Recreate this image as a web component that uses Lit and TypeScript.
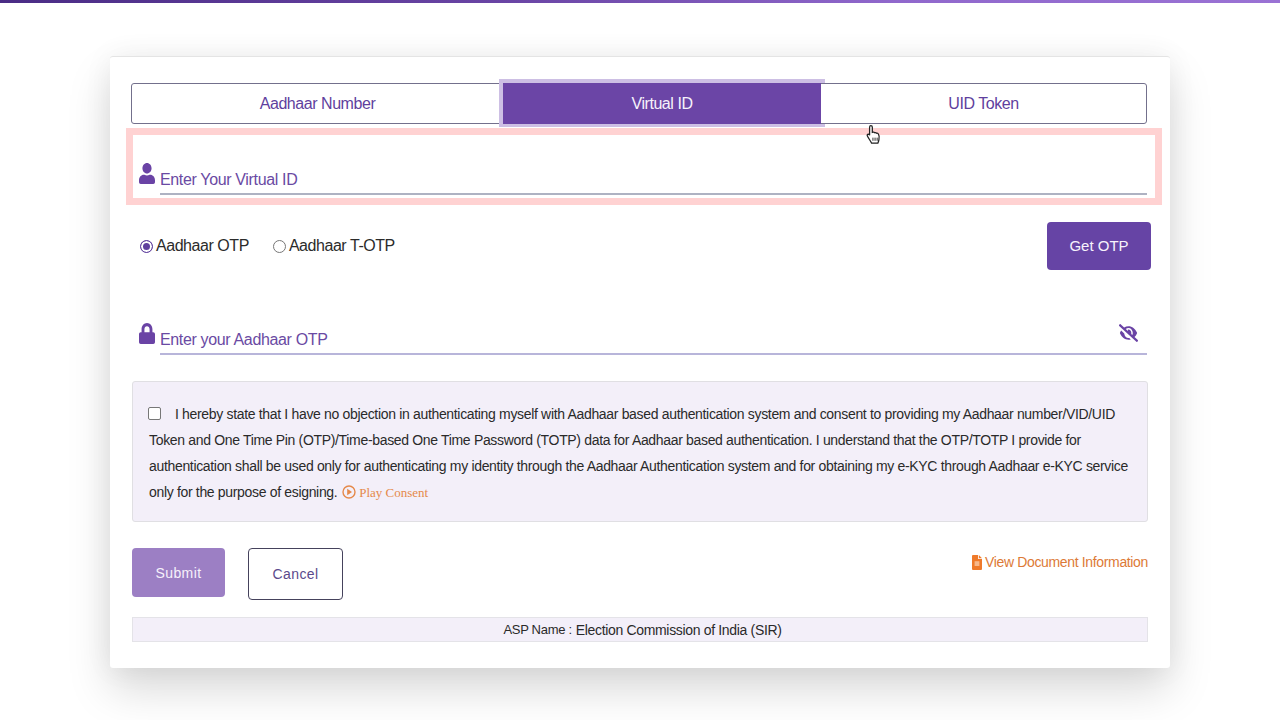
import { LitElement, html, css } from "lit";
import { customElement } from "lit/decorators.js";

@customElement("app-root")
export class AppRoot extends LitElement {
  static styles = css`
    :host { display: block; width: 1280px; height: 720px; overflow: hidden; background: #fff; position: relative; font-family: "Liberation Sans", Arial, sans-serif; color: #222; }
    * { box-sizing: border-box; }
    .bar { height: 3px; background: linear-gradient(90deg, #4a2c85 0%, #6a45a5 40%, #9068cc 70%, #9a72d4 100%); }
    .card { width: 1060px; margin: 53px 0 0 110px; padding: 26px 23px 26px 21px; background: #fff; border-radius: 3px; border-top: 1px solid #e4e4e4; box-shadow: 0 22px 44px rgba(0,0,0,.15), 0 0 30px rgba(0,0,0,.06); }
    .tabs { display: flex; height: 41px; border: 1px solid #73708c; border-radius: 3px; width: 1016px; }
    .tab { font: inherit; font-size: 16px; background: none; border: 0; padding: 0; color: #5f3f9e; letter-spacing: -.45px; }
    .t1 { width: 371px; }
    .t2 { width: 318px; background: #6b45a6; color: #f6f2fb; position: relative; margin: -1px 0; }
    .t2::before { content: ""; position: absolute; inset: -4px -4px -3px -4px; border: solid #cdbfe4; border-width: 4px 0 3px 4px; }
    .t3 { width: 325px; }
    .pink { margin: 4px -15px 0 -5px; height: 77px; border: 7px solid #ffd2d2; background: #fff; display: flex; align-items: flex-end; padding: 0 8px 3px 6px; }
    .field { display: flex; align-items: flex-end; flex: 1; }
    .ico { flex: none; fill: #6a43a5; display: block; }
    .person { width: 16px; height: 21px; margin: 0 5px 11px 0; }
    .input { flex: 1; height: 34px; border: 0; border-bottom: 2px solid #aeb2c2; outline: none; padding: 7px 0 1px; font: inherit; font-size: 16px; letter-spacing: -.35px; color: #5f3f9e; background: none; }
    .input::placeholder { color: #6a4aa3; opacity: 1; }
    .mode { display: flex; justify-content: space-between; align-items: center; height: 48px; margin: 17px -4px 0 0; padding-left: 9px; }
    .radios { display: flex; align-items: center; font-size: 16px; letter-spacing: -.45px; color: #2b2b2b; }
    .radio { width: 13px; height: 13px; border-radius: 50%; border: 1px solid #777; background: #fff; margin-right: 3px; flex: none; }
    .radio.on { border: 1.5px solid #5f3f9e; position: relative; background: #5f3f9e; box-shadow: inset 0 0 0 2px #fff; }
    .gap { width: 24px; }
    .otp { width: 104px; height: 48px; border: 0; border-radius: 4px; background: #6644a5; color: #f7f3fc; font: inherit; font-size: 15px; padding: 0 0 2px; letter-spacing: 0; }
    .secure { display: flex; align-items: flex-end; margin: 50px 0 0 8px; height: 35px; position: relative; }
    .lock { width: 16px; height: 21px; margin: 0 5px 11px 0; }
    .secure .input { border-bottom-color: #b8b5da; height: 35px; }
    .eye { position: absolute; right: 9px; top: 4px; width: 19px; height: 18px; }
    .consent { margin-top: 26px; margin-left: 1px; width: 1016px; height: 141px; background: #f3eff9; border: 1px solid #e0dfe3; border-radius: 3px; padding: 19px 0 0 16px; font-size: 14px; letter-spacing: -.33px; line-height: 26px; color: #2a2a2a; white-space: nowrap; }
    .check { display: inline-block; width: 13px; height: 13px; border: 1px solid #777; border-radius: 2px; background: #fff; margin: 0 14px 0 -1px; vertical-align: -1px; }
    .play { color: #e5894a; font-family: "Liberation Serif", serif; font-size: 13px; letter-spacing: 0; }
    .play svg { width: 14px; height: 14px; vertical-align: -2px; margin: 0 0 0 1px; }
    .actions { display: flex; align-items: flex-start; margin: 26px 0 0 1px; height: 52px; width: 1016px; }
    .btn { font: inherit; font-size: 14px; letter-spacing: .4px; border-radius: 4px; }
    .submit { width: 93px; height: 49px; border: 0; background: #9c7fc4; color: #f6f1fb; }
    .cancel { width: 95px; height: 52px; margin-left: 23px; border: 1.5px solid #45425c; background: #fff; color: #5a4a8c; }
    .doc { margin-left: auto; display: flex; align-items: center; gap: 3px; margin-top: 6px; font-size: 14px; letter-spacing: -.35px; color: #dd7a36; }
    .doc svg { width: 10px; height: 15px; }
    .asp { margin: 17px 0 0 1px; width: 1016px; height: 25px; background: #f3eff9; border: 1px solid #e4e3e8; display: flex; justify-content: center; align-items: center; padding: 1px 0 0 5px; gap: 4px; font-size: 14px; letter-spacing: -.33px; color: #2a2a2a; }
    .asp small { font-size: 13px; letter-spacing: -.3px; position: relative; top: -1px; }
    .hand { position: absolute; left: 866px; top: 124px; width: 16px; height: 21px; }
  `;
  render() {
    return html`
      <div class="bar"></div>
      <div class="card">
        <div class="tabs">
          <button class="tab t1">Aadhaar Number</button>
          <button class="tab t2">Virtual ID</button>
          <button class="tab t3">UID Token</button>
        </div>
        <div class="pink">
          <div class="field">
            <svg class="ico person" viewBox="0 0 448 512" preserveAspectRatio="none"><path d="M224 256c70.7 0 128-57.3 128-128S294.7 0 224 0 96 57.3 96 128s57.3 128 128 128zm89.6 32h-16.7c-22.2 10.2-46.9 16-72.9 16s-50.6-5.8-72.9-16h-16.7C60.2 288 0 348.2 0 422.4V464c0 26.5 21.5 48 48 48h352c26.5 0 48-21.5 48-48v-41.6c0-74.2-60.2-134.4-134.4-134.4z"/></svg>
            <input class="input" placeholder="Enter Your Virtual ID" />
          </div>
        </div>
        <div class="mode">
          <div class="radios">
            <span class="radio on"></span>Aadhaar OTP<span class="gap"></span>
            <span class="radio"></span>Aadhaar T-OTP
          </div>
          <button class="otp">Get OTP</button>
        </div>
        <div class="secure">
          <svg class="ico lock" viewBox="0 0 448 512" preserveAspectRatio="none"><path d="M400 224h-24v-72C376 68.2 307.8 0 224 0S72 68.2 72 152v72H48c-26.5 0-48 21.5-48 48v192c0 26.5 21.5 48 48 48h352c26.5 0 48-21.5 48-48V272c0-26.5-21.5-48-48-48zm-104 0H152v-72c0-39.7 32.3-72 72-72s72 32.3 72 72v72z"/></svg>
          <input class="input" placeholder="Enter your Aadhaar OTP" />
          <svg class="ico eye" viewBox="0 0 640 512" preserveAspectRatio="none"><path d="M320 400c-75.85 0-137.25-58.71-142.9-133.11L72.2 185.82c-13.79 17.3-26.48 35.59-36.72 55.59a32.35 32.35 0 0 0 0 29.19C89.71 376.41 197.07 448 320 448c26.91 0 52.87-4 77.89-10.46L346 397.39a144.13 144.13 0 0 1-26 2.61zm313.82 58.1l-110.55-85.44a331.25 331.25 0 0 0 81.25-102.07 32.35 32.35 0 0 0 0-29.19C550.29 135.59 442.93 64 320 64a308.15 308.15 0 0 0-147.32 37.7L45.46 3.37A16 16 0 0 0 23 6.18L3.37 31.45A16 16 0 0 0 6.18 53.9l588.36 454.73a16 16 0 0 0 22.46-2.81l19.64-25.27a16 16 0 0 0-2.82-22.45zm-183.72-142l-39.3-30.38A94.75 94.75 0 0 0 416 256a94.76 94.76 0 0 0-121.31-92.21A47.65 47.65 0 0 1 304 192a46.64 46.64 0 0 1-1.54 10l-73.61-56.89A142.31 142.31 0 0 1 320 112a143.92 143.92 0 0 1 144 144c0 21.63-5.29 41.79-13.9 60.11z"/></svg>
        </div>
        <div class="consent">
          <span class="check"></span>I hereby state that I have no objection in authenticating myself with Aadhaar based authentication system and consent to providing my Aadhaar number/VID/UID<br />
          Token and One Time Pin (OTP)/Time-based One Time Password (TOTP) data for Aadhaar based authentication. I understand that the OTP/TOTP I provide for<br />
          authentication shall be used only for authenticating my identity through the Aadhaar Authentication system and for obtaining my e-KYC through Aadhaar e-KYC service<br />
          only for the purpose of esigning.
          <span class="play"><svg viewBox="0 0 14 14"><circle cx="7" cy="7" r="6" fill="none" stroke="#e5894a" stroke-width="1.4"/><path d="M5.2 3.8 10 7l-4.8 3.2z" fill="#e5894a"/></svg> Play Consent</span>
        </div>
        <div class="actions">
          <button class="btn submit">Submit</button>
          <button class="btn cancel">Cancel</button>
          <div class="doc">
            <svg viewBox="0 0 10 15"><path fill="#ef7a2a" d="M1 0h5v3.5c0 .3.2.5.5.5H10v10a1 1 0 0 1-1 1H1a1 1 0 0 1-1-1V1a1 1 0 0 1 1-1z"/><path fill="#ef7a2a" d="M6.8 0 10 3.2H6.8z"/><rect x="2.6" y="6.2" width="4.8" height="4.8" fill="#f7b88a"/></svg>
            View Document Information
          </div>
        </div>
        <div class="asp"><small>ASP Name :</small> Election Commission of India (SIR)</div>
      </div>
      <svg class="hand" viewBox="0 0 15 20"><path d="M4.5 1.5c.9 0 1.4.6 1.4 1.5v5l.6-.2c.7-.2 1.3 0 1.6.5.7-.3 1.4-.1 1.7.5.8-.3 1.6 0 1.9.8.8 1 .9 3 .5 5.2-.3 1.7-.7 2.6-1 3.4H5.2C4 16 2.6 14 1.3 11.7c-.5-.8-.3-1.5.2-1.8.6-.3 1.3 0 1.7.6l.1.2V3c0-.9.3-1.5 1.2-1.5z" fill="#fff" stroke="#222" stroke-width="1.2"/><path d="M6.5 13v3M8.5 13v3M10.5 13v3" stroke="#222" stroke-width=".9"/></svg>
    `;
  }
}
